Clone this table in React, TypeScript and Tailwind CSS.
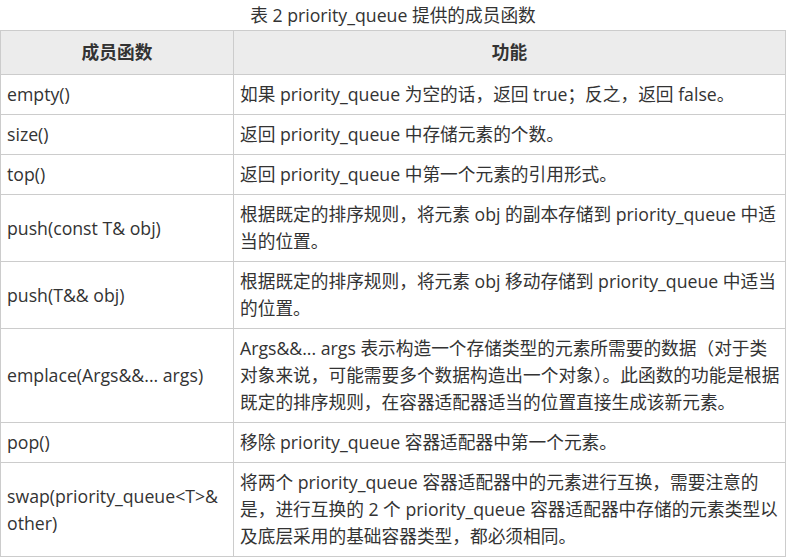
const rows: { name: string[]; desc: string[] }[] = [
  { name: ['empty()'], desc: ['如果 priority_queue 为空的话，返回 true；反之，返回 false。'] },
  { name: ['size()'], desc: ['返回 priority_queue 中存储元素的个数。'] },
  { name: ['top()'], desc: ['返回 priority_queue 中第一个元素的引用形式。'] },
  {
    name: ['push(const T& obj)'],
    desc: ['根据既定的排序规则，将元素 obj 的副本存储到 priority_queue 中适', '当的位置。'],
  },
  {
    name: ['push(T&& obj)'],
    desc: ['根据既定的排序规则，将元素 obj 移动存储到 priority_queue 中适当', '的位置。'],
  },
  {
    name: ['emplace(Args&&... args)'],
    desc: [
      'Args&&... args 表示构造一个存储类型的元素所需要的数据（对于类',
      '对象来说，可能需要多个数据构造出一个对象）。此函数的功能是根据',
      '既定的排序规则，在容器适配器适当的位置直接生成该新元素。',
    ],
  },
  { name: ['pop()'], desc: ['移除 priority_queue 容器适配器中第一个元素。'] },
  {
    name: ['swap(priority_queue<T>&', 'other)'],
    desc: [
      '将两个 priority_queue 容器适配器中的元素进行互换，需要注意的',
      '是，进行互换的 2 个 priority_queue 容器适配器中存储的元素类型以',
      '及底层采用的基础容器类型，都必须相同。',
    ],
  },
];

function Lines({ lines }: { lines: string[] }) {
  return (
    <>
      {lines.map((l, i) => (
        <div key={i} className="whitespace-nowrap">
          {l}
        </div>
      ))}
    </>
  );
}

export default function App() {
  return (
    <div
      className="w-[791px] bg-white text-[#333333] text-[17.7px] leading-[27px]"
      style={{ fontFamily: '"Open Sans", "Noto Sans CJK SC", sans-serif' }}
    >
      <div className="w-[786px] h-[30px] pt-[2px] text-center">表 2 priority_queue 提供的成员函数</div>
      <table className="w-[786px] table-fixed border-collapse">
        <colgroup>
          <col className="w-[233px]" />
          <col />
        </colgroup>
        <thead>
          <tr className="bg-[#ececec]">
            <th className="border border-[#cccccc] py-[8px] font-bold text-center">成员函数</th>
            <th className="border border-[#cccccc] py-[8px] font-bold text-center">功能</th>
          </tr>
        </thead>
        <tbody>
          {rows.map((r, i) => (
            <tr key={i}>
              <td className="border border-[#cccccc] px-[6px] py-[6px] align-middle overflow-hidden">
                <Lines lines={r.name} />
              </td>
              <td className="border border-[#cccccc] px-[6px] py-[6px] align-middle overflow-hidden">
                <Lines lines={r.desc} />
              </td>
            </tr>
          ))}
        </tbody>
      </table>
    </div>
  );
}
